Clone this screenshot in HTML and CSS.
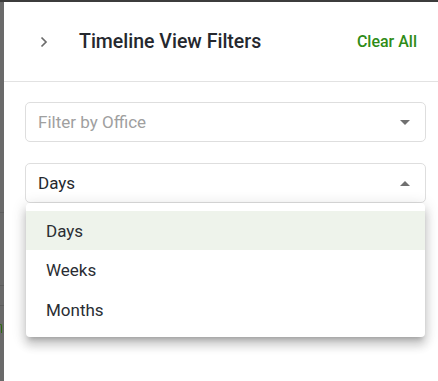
FILE: index.html
```html
<!DOCTYPE html>
<html>
<head>
<meta charset="utf-8">
<link rel="stylesheet" href="styles.css">
</head>
<body>
<div class="topbar"></div>
<div class="screen">
  <div class="backdrop">
    <div class="bd-line bd-l1"></div>
    <div class="bd-line bd-l2"></div>
    <div class="bd-line bd-l3"></div>
    <div class="bd-mark"></div>
  </div>
  <div class="panel">
    <div class="header">
      <div class="header-left">
        <svg class="chevron" width="10" height="12" viewBox="0 0 10 12"><path d="M2.5 1.5 L7 6 L2.5 10.5" fill="none" stroke="#6b6b6b" stroke-width="1.7"/></svg>
        <h1 class="title">Timeline View Filters</h1>
      </div>
      <span class="clear">Clear All</span>
    </div>
    <div class="body">
      <div class="select">
        <span class="placeholder">Filter by Office</span>
        <span class="caret caret-down"></span>
      </div>
      <div class="select-wrap">
        <div class="select open">
          <span class="value">Days</span>
          <span class="caret caret-up"></span>
        </div>
        <ul class="menu">
          <li class="item active">Days</li>
          <li class="item">Weeks</li>
          <li class="item">Months</li>
        </ul>
      </div>
    </div>
  </div>
</div>
</body>
</html>
```
FILE: styles.css
```css
html, body {
  margin: 0;
  padding: 0;
  height: 100%;
  background: #ffffff;
  font-family: Roboto, "Liberation Sans", Arial, sans-serif;
  overflow: hidden;
}
.topbar {
  height: 2px;
  background: #3c3c3c;
}
.screen {
  display: flex;
  height: 379px;
}
.backdrop {
  width: 4px;
  background: #6a6a6a;
  position: relative;
  overflow: hidden;
}
.bd-line {
  position: absolute;
  left: 0;
  right: 0;
  height: 1px;
  background: #5e5e5e;
}
.bd-l1 { top: 210px; }
.bd-l2 { top: 283px; }
.bd-l3 { top: 303px; }
.bd-mark {
  position: absolute;
  left: 0;
  top: 322px;
  width: 2px;
  height: 9px;
  border-right: 1.5px solid #2d6a10;
  border-top: 1.5px solid #2d6a10;
  border-top-right-radius: 3px;
  box-sizing: border-box;
}
.panel {
  flex: 1;
  background: #fff;
  display: flex;
  flex-direction: column;
}
.header {
  height: 79px;
  border-bottom: 1px solid #e2e2e2;
  display: flex;
  align-items: center;
  justify-content: space-between;
  padding: 0 21px 0 35px;
}
.header-left {
  display: flex;
  align-items: center;
  gap: 30px;
}
.chevron {
  display: block;
}
.title {
  margin: 0;
  font-size: 19.5px;
  font-weight: 500;
  color: #25282e;
}
.clear {
  font-size: 16px;
  font-weight: 500;
  color: #2f8c17;
}
.body {
  padding: 20px 12px 0 21px;
  display: flex;
  flex-direction: column;
  gap: 21px;
}
.select {
  height: 38px;
  border: 1px solid #dedede;
  border-radius: 5px;
  display: flex;
  align-items: center;
  justify-content: space-between;
  padding: 0 15px 0 12px;
  font-size: 17px;
}
.placeholder {
  color: #a0a0a0;
}
.value {
  color: #25282e;
}
.caret {
  width: 0;
  height: 0;
  border-left: 5px solid transparent;
  border-right: 5px solid transparent;
}
.caret-down {
  border-top: 5px solid #707070;
}
.caret-up {
  border-bottom: 5px solid #707070;
}
.select-wrap {
  position: relative;
}
.menu {
  position: absolute;
  left: 1px;
  right: 1px;
  top: 40px;
  margin: 0;
  padding: 8px 0 7px;
  list-style: none;
  background: #fff;
  border-radius: 4px;
  box-shadow: 0 5px 5px -3px rgba(0,0,0,0.2), 0 8px 10px 1px rgba(0,0,0,0.14), 0 3px 14px 2px rgba(0,0,0,0.12);
  z-index: 2;
}
.item {
  height: 40px;
  display: flex;
  align-items: center;
  padding-left: 20px;
  font-size: 17px;
  color: #2a2d33;
}
.item.active {
  background: #eef3eb;
  height: 39px;
}
```
